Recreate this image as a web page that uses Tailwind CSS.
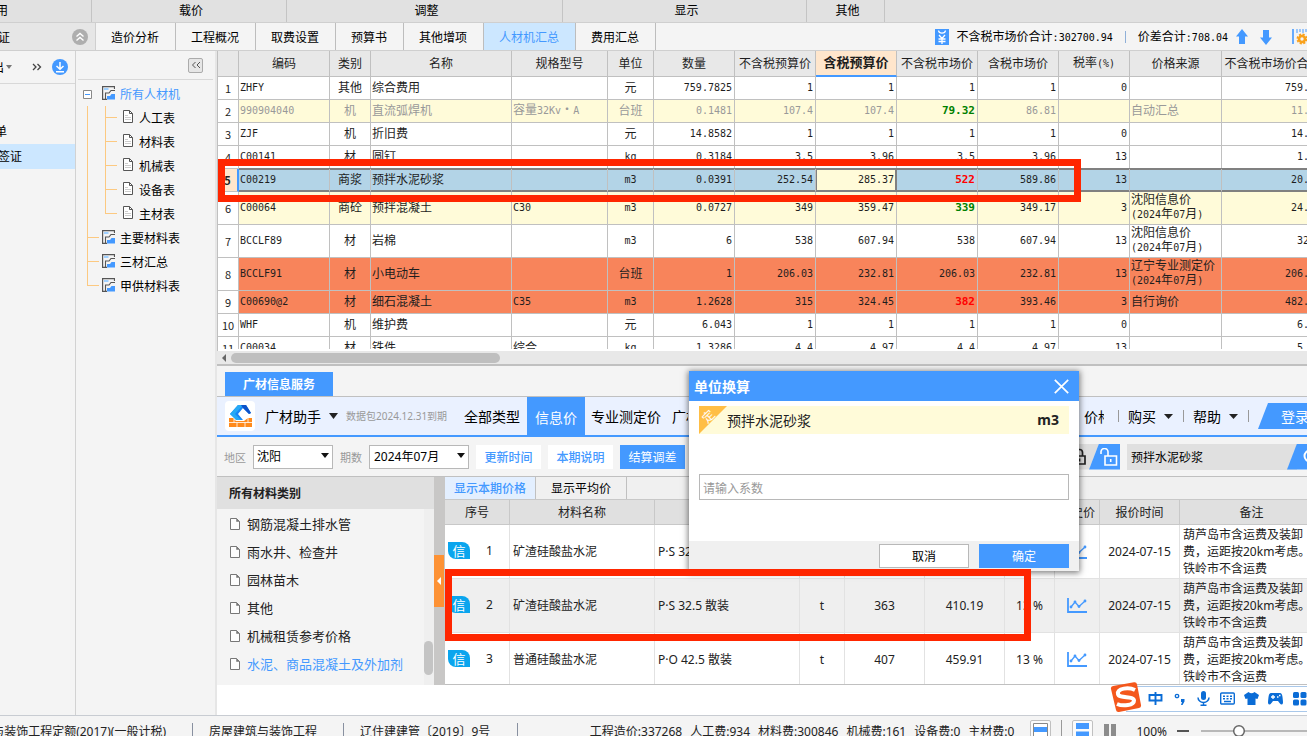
<!DOCTYPE html>
<html lang="zh-CN">
<head>
<meta charset="utf-8">
<title>人材机汇总</title>
<script src="https://cdn.jsdelivr.net/npm/@tailwindcss/browser@4"></script>
</head>
<body class="relative flex h-screen flex-col overflow-hidden bg-[#f4f4f4] font-['Noto_Sans_CJK_SC',sans-serif] text-xs leading-4 text-black">

<svg class="hidden">
  <symbol id="page" viewBox="0 0 10 13"><path d="M.5.5h6l3 3v9h-9z" fill="#fff" stroke="#555"/><path d="M6.500.5v3h3" fill="none" stroke="#555"/><path d="M2 5.500h3M2 7.500h6M2 9.500h6" stroke="#ccc"/></symbol>
  <symbol id="page-thin" viewBox="0 0 10 12"><path d="M.5.5h6l3 3v8h-9z" fill="#fdfdfd" stroke="#777"/><path d="M6.500.5v3h3z" fill="#777" stroke="#777" stroke-width=".5"/></symbol>
  <symbol id="report" viewBox="0 0 13 14"><path d="M12.500 3V.6H.6v12.800H5" fill="none" stroke="#555" stroke-width="1.200"/><path d="M2 2h4.500v2H2z" fill="#9fd0ff"/><path d="M13 4.500H9L7 7H3.500v6" fill="none" stroke="#555" stroke-width="1.100"/><path d="M5 10h3l1.500-2H13v5.500H5z" fill="#4499ff"/></symbol>
  <symbol id="chart" viewBox="0 0 20 15"><path d="M1 0v14h19" fill="none" stroke="#4499ff" stroke-width="1.800"/><path d="m4 9 4-5 4 4.500L18 3" fill="none" stroke="#4499ff" stroke-width="1.300"/><g fill="#4499ff"><circle cx="4" cy="9" r="1.400"/><circle cx="8" cy="4" r="1.400"/><circle cx="12" cy="8.500" r="1.400"/><circle cx="18" cy="3" r="1.400"/></g></symbol>
</svg>

<!-- ribbon group names -->
<div class="flex h-[23px] shrink-0 border-b border-[#cfcfcf] bg-[#e1e1e1] text-center leading-5 whitespace-nowrap">
  <div class="w-[92px] shrink-0 border-r border-[#c4c4c4] text-left"><span class="-ml-1">用</span></div>
  <div class="w-[195px] shrink-0 border-r border-[#c4c4c4] pl-1">载价</div>
  <div class="w-[276px] shrink-0 border-r border-[#c4c4c4] pl-1">调整</div>
  <div class="w-[244px] shrink-0 border-r border-[#c4c4c4] pl-1">显示</div>
  <div class="w-[78px] shrink-0 border-r border-[#c4c4c4] pl-1">其他</div>
</div>

<!-- page tabs -->
<div class="flex h-7 shrink-0 border-b border-[#cfcfcf] whitespace-nowrap">
  <div class="flex w-24 shrink-0 items-center justify-between border-r border-[#cfcfcf] bg-[#e6e6e6] pr-[7px]">
    <span class="-ml-0.5">证</span>
    <button aria-label="收起"><svg class="size-4" viewBox="0 0 16 16"><circle cx="8" cy="8" r="8" fill="#aeaeae"/><path d="m4.500 7.500 3.500-3 3.500 3m-7 4 3.500-3 3.500 3" fill="none" stroke="#fff" stroke-width="1.400"/></svg></button>
  </div>
  <nav class="flex text-center">
    <button class="border-r border-[#bdbdbd] pr-4 pl-[15px]">造价分析</button>
    <button class="border-r border-[#bdbdbd] pr-4 pl-[15px]">工程概况</button>
    <button class="border-r border-[#bdbdbd] pr-4 pl-[15px]">取费设置</button>
    <button class="border-r border-[#bdbdbd] pr-4 pl-[15px]">预算书</button>
    <button class="border-r border-[#bdbdbd] pr-4 pl-[15px]">其他增项</button>
    <button class="border-r border-[#bdbdbd] bg-[#cce7ff] pr-4 pl-[15px] text-[#4499ff]">人材机汇总</button>
    <button class="border-r border-[#bdbdbd] pr-4 pl-[15px]">费用汇总</button>
  </nav>
  <div class="-mr-[3px] ml-auto flex shrink-0 items-center">
    <svg class="mr-2 h-4 w-3.5" viewBox="0 0 14 16"><path d="M0 0h14v16H0z" fill="#4499ff"/><path d="M3.500 1.500C4 5 10 5 10.500 1.500M4 6l3 3.500L10 6M3.500 10h7M3.500 12.500h7M7 9.500V15" fill="none" stroke="#fff" stroke-width="1.300"/></svg>
    <span>不含税市场价合计<span class="font-['DejaVu_Sans_Mono'] text-[10px]">:302700.94</span></span>
    <span class="mx-3 h-3 w-px bg-[#8fb0d8]"></span>
    <span>价差合计<span class="font-['DejaVu_Sans_Mono'] text-[10px]">:708.04</span></span>
    <svg class="ml-2 h-4 w-3" viewBox="0 0 12 16"><path d="m6 0 6 7.500H9V15H3V7.500H0z" fill="#4499ff"/></svg>
    <svg class="ml-3 h-4 w-3" viewBox="0 0 12 16"><path d="m6 16 6-7.500H9V1H3v7.500H0z" fill="#4499ff"/></svg>
    <svg class="ml-5 h-4 w-[18px]" viewBox="0 0 18 16"><path d="M1 0v15" stroke="#4499ff" stroke-width="1.600"/><path d="M5 0v4M8 0v3M11 0v4M14 0v3M17 0v4" stroke="#4499ff"/><circle cx="10" cy="10" r="3" fill="none" stroke="#f9a11b" stroke-width="2.600"/><circle cx="10" cy="10" r="4.700" fill="none" stroke="#f9a11b" stroke-width="1.600" stroke-dasharray="2.200 1.490"/></svg>
  </div>
</div>

<div class="flex min-h-0 flex-1">
  <!-- project column -->
  <aside class="w-[76px] shrink-0 overflow-hidden border-r border-[#d2d2d2]">
    <div class="flex h-[33px] items-center border-b border-[#d8d8d8]">
      <button class="-ml-2 flex items-center">出<svg class="ml-0.5 h-1 w-1.5" viewBox="0 0 6 4"><path d="M0 0h6L3 4z" fill="#777"/></svg></button>
      <svg class="ml-5 h-2 w-2.5" viewBox="0 0 10 8"><path d="m1 1 3 3-3 3m4.500-6 3 3-3 3" fill="none" stroke="#444" stroke-width="1.300"/></svg>
      <button class="ml-2.5" aria-label="下载"><svg class="size-4" viewBox="0 0 16 16"><circle cx="8" cy="8" r="8" fill="#4499ff"/><path d="M8 3v7M4.500 7 8 10.300 11.500 7M4 12.700h8" fill="none" stroke="#fff" stroke-width="1.500"/></svg></button>
    </div>
    <div class="mt-[35px] h-[25px] leading-6"><span class="-ml-[5px]">单</span></div>
    <div class="h-[25px] bg-[#cce7ff] leading-6"><span class="-ml-0.5">签证</span></div>
  </aside>

  <!-- material tree -->
  <aside class="w-[141px] shrink-0 border-r-2 border-[#e6e6e6] px-0.5">
    <div class="flex h-[29px] items-center justify-end border-b border-[#d8d8d8] pr-2.5">
      <button aria-label="折叠" class="flex h-[15px] w-[15px] items-center justify-center rounded-xs border border-[#ababab] bg-[#e6e6e6]"><svg class="h-2 w-2.5" viewBox="0 0 10 8"><path d="M4.500 1 1.500 4l3 3M9 1 6 4l3 3" fill="none" stroke="#555"/></svg></button>
    </div>
    <div class="pt-0.5">
      <div class="flex h-6 items-center text-[#4499ff]">
        <svg class="ml-[5px] size-[9px]" viewBox="0 0 9 9"><path d="M.5.5h8v8h-8z" fill="#fff" stroke="#888"/><path d="M2 4.500h5" stroke="#4499ff"/></svg>
        <svg class="mr-[5px] mb-0.5 ml-2.5 h-3.5 w-[13px]"><use href="#report"/></svg>所有人材机
      </div>
      <ul id="tree" class="ml-[9px] leading-6"></ul>
    </div>
  </aside>

  <main class="flex min-w-0 flex-1 flex-col bg-white">
    <!-- upper grid -->
    <section class="h-[300px] shrink-0 overflow-hidden border-l border-[#c0c0c0]">
      <div class="h-[298px] overflow-hidden">
        <table class="w-[1106px] table-fixed border-separate border-spacing-0 leading-3.5 text-[#1e1e1e]">
          <colgroup><col class="w-[21px]"><col class="w-[91px]"><col class="w-[41px]"><col class="w-[141px]"><col class="w-[96px]"><col class="w-[46px]"><col class="w-[81px]"><col class="w-[81px]"><col class="w-[81px]"><col class="w-[81px]"><col class="w-[81px]"><col class="w-[71px]"><col class="w-[92px]"><col class="w-[102px]"></colgroup>
          <thead><tr id="gridHead"></tr></thead>
          <tbody id="gridBody"></tbody>
        </table>
      </div>
    </section>
    <div class="flex h-[13px] shrink-0 items-center bg-[#e8e8e8]">
      <svg class="ml-[5px] h-2 w-1" viewBox="0 0 4 8"><path d="M4 0v8L0 4z" fill="#666"/></svg>
      <div class="ml-[5px] h-2.5 w-[269px] rounded-full bg-[#bfbfbf]"></div>
    </div>

    <!-- price service -->
    <section class="flex min-h-0 flex-1 flex-col overflow-hidden border-t-2 border-[#c0c0c0]">
      <div class="flex h-[31px] shrink-0 items-end border-b border-[#c0c0c0] bg-[#f4f4f4] pl-2">
        <button class="h-6 w-[108px] bg-[#4499ff] font-bold text-white">广材信息服务</button>
      </div>
      <div class="flex h-10 shrink-0 border-b-2 border-[#4499ff] bg-[#eaf1ff] text-sm whitespace-nowrap">
        <div class="flex w-[310px] shrink-0 items-center pl-2">
          <svg class="size-[30px] shrink-0" viewBox="0 0 30 30"><rect width="30" height="30" rx="4" fill="#fff"/><path d="M13 4h8l5 8-2 1-6-6-5 6 5 6h-6l-7-6z" fill="#1a86f5"/><path d="m5 13 8-9h5l-8 9 6 6h-5z" fill="#27a9f5"/><path d="M16 4h5l5 8-2 1-6-6z" fill="#0c52c9"/><path d="M4 17h4l3 3h8l4-3h4v9H4z" fill="#ff8a1c"/><path d="M4 21.500h23M12 21.500V26M20 21.500V26M23 17v4.500M9 18v3.500" stroke="#fff" stroke-width=".8"/></svg>
          <button class="ml-2.5 flex items-center">广材助手<svg class="ml-2 h-1.5 w-[9px]" viewBox="0 0 9 6"><path d="M0 0h9L4.500 6z" fill="#222"/></svg></button>
          <span class="ml-2 font-['Noto_Sans','Noto_Sans_CJK_SC',sans-serif] text-[10px] text-[#999]">数据包2024.12.31到期</span>
          <button class="ml-auto pr-[7px]">全部类型</button>
        </div>
        <button class="h-[39px] w-[58px] shrink-0 bg-[#4499ff] text-white">信息价</button>
        <button class="ml-1.5">专业测定价</button>
        <div class="ml-[11px] flex w-4 overflow-hidden"><button>广材网</button></div>
        <div class="-mr-[9px] ml-auto flex items-center">
          <button class="mr-3.5 w-5 overflow-hidden">价格</button><span class="h-3 w-px bg-[#999]"></span>
          <button class="ml-[9px] flex items-center">购买<svg class="mx-2 h-[5px] w-[9px]" viewBox="0 0 9 5"><path d="M0 0h9L4.500 5z" fill="#222"/></svg></button>
          <span class="ml-0.5 h-3 w-px bg-[#999]"></span>
          <button class="ml-[9px] flex items-center">帮助<svg class="mx-2 h-[5px] w-[9px]" viewBox="0 0 9 5"><path d="M0 0h9L4.500 5z" fill="#222"/></svg></button>
          <span class="mr-[9px] ml-0.5 h-3 w-px bg-[#999]"></span>
          <button class="h-[26px] w-[58px] bg-[#4499ff] pl-4 text-white [clip-path:polygon(10px_0,100%_0,100%_100%,0_100%)]">登录</button>
        </div>
      </div>
      <div class="flex h-10 shrink-0 items-center border-b border-[#c0c0c0] bg-[#f4f4f4] pl-[7px] whitespace-nowrap">
        <label for="area" class="mr-[7px] text-[11px] text-[#999]">地区</label>
        <div class="relative mr-[7px]"><select id="area" class="h-6 w-20 appearance-none border border-[#b8b8b8] bg-white px-[3px] font-['Noto_Sans','Noto_Sans_CJK_SC',sans-serif]"><option>沈阳</option></select><svg class="pointer-events-none absolute top-2 right-1 h-[5px] w-2" viewBox="0 0 8 5"><path d="M0 0h8L4 5z" fill="#111"/></svg></div>
        <label for="term" class="mr-[7px] text-[11px] text-[#999]">期数</label>
        <div class="relative mr-[7px]"><select id="term" class="h-6 w-[100px] appearance-none border border-[#b8b8b8] bg-white px-1 font-['Noto_Sans','Noto_Sans_CJK_SC',sans-serif]"><option>2024年07月</option></select><svg class="pointer-events-none absolute top-2 right-1 h-[5px] w-2" viewBox="0 0 8 5"><path d="M0 0h8L4 5z" fill="#111"/></svg></div>
        <button class="mr-[7px] h-6 w-[65px] bg-white font-medium text-[#4499ff]">更新时间</button>
        <button class="mr-[7px] h-6 w-[65px] bg-white font-medium text-[#4499ff]">本期说明</button>
        <button class="h-6 w-[65px] bg-[#4499ff] text-white">结算调差</button>
        <div class="ml-auto flex h-[26px]">
          <button aria-label="锁定" class="-mr-2.5 flex h-[26px] w-10 items-center bg-[#dedede] pl-3.5 [clip-path:polygon(0_0,100%_0,30px_100%,0_100%)]"><svg class="h-[17px] w-[13px]" viewBox="0 0 13 17"><path d="M1 8h11v8H1zM3.500 8V4.500a3 3 0 0 1 6 0V8M6.500 10.500v3" fill="none" stroke="#222" stroke-width="1.700"/></svg></button>
          <button aria-label="解锁" class="flex h-[26px] w-[31px] items-center bg-[#4499ff] pl-2.5 [clip-path:polygon(10px_0,100%_0,100%_100%,0_100%)]"><svg class="h-[18px] w-[19px]" viewBox="0 0 19 18"><path d="M6 8h11.500v9H6zM9 8V4.500a3.500 3.500 0 0 0-7-1V6M11.700 11v3" fill="none" stroke="#fff" stroke-width="1.600"/></svg></button>
          <input aria-label="搜索材料" value="预拌水泥砂浆" class="-mr-2.5 ml-[7px] h-[26px] w-[170px] bg-[#e0e0e0] px-1">
          <button aria-label="搜索" class="flex h-[26px] w-5 items-center overflow-hidden bg-[#4499ff] pl-4 [clip-path:polygon(10px_0,100%_0,100%_100%,0_100%)]"><svg class="size-4 shrink-0" viewBox="0 0 16 16"><circle cx="7" cy="7" r="5.500" fill="none" stroke="#fff" stroke-width="2"/></svg></button>
        </div>
      </div>

      <div class="flex h-[208px] shrink-0">
        <div class="flex w-[217px] shrink-0 flex-col bg-[#f4f4f4]">
          <h2 class="h-8 shrink-0 bg-[#e0e0e0] pl-3 leading-8 font-bold text-[#222]">所有材料类别</h2>
          <div class="flex flex-1">
            <ul id="kinds" class="flex-1 pt-px text-[13px] leading-7 text-[#222]"></ul>
            <div class="flex w-2.5 items-end bg-[#efefef] pb-2.5"><div class="h-[34px] w-[9px] rounded-full bg-[#c4c4c4]"></div></div>
          </div>
        </div>
        <div class="flex w-[11px] shrink-0 items-center bg-[#c8c7c6]"><button aria-label="收起类别" class="flex h-[52px] w-2.5 items-center justify-center bg-[#fd9235]"><svg class="h-2 w-1" viewBox="0 0 4 8"><path d="M4 0v8L0 4z" fill="#fff"/></svg></button></div>
        <div class="min-w-0 flex-1 overflow-hidden border-b border-[#c0c0c0]">
          <div class="flex h-[23px] border-b border-[#c8c8c8] bg-[#f0f0f0]">
            <button class="w-[91px] border-r border-[#c0c0c0] bg-[#e3efff] font-medium text-[#4499ff]">显示本期价格</button>
            <button class="w-[91px] border-r border-[#c0c0c0]">显示平均价</button>
          </div>
          <table class="w-[879px] table-fixed border-separate border-spacing-0 text-[#222]">
            <colgroup><col class="w-[65px]"><col class="w-[145px]"><col class="w-[145px]"><col class="w-[45px]"><col class="w-[80px]"><col class="w-[80px]"><col class="w-[50px]"><col class="w-[45px]"><col class="w-[80px]"><col class="w-[144px]"></colgroup>
            <thead><tr id="priceHead"></tr></thead>
            <tbody id="priceBody" class="font-['Noto_Sans','Noto_Sans_CJK_SC',sans-serif]"></tbody>
          </table>
        </div>
      </div>
    </section>
  </main>
</div>

<!-- status bar -->
<footer class="flex h-[21px] shrink-0 border-t border-[#c8ccd2] font-['Noto_Sans','Noto_Sans_CJK_SC',sans-serif] whitespace-nowrap text-[#222]">
  <div class="flex w-[178px] shrink-0 justify-end overflow-hidden pt-2 pr-3"><span>与装饰工程定额(2017)(一般计税)</span></div>
  <span class="mt-[7px] ml-3.5 h-4 w-px shrink-0 bg-[#8890a0]"></span>
  <span class="mx-4 pt-2">房屋建筑与装饰工程</span>
  <span class="mt-[7px] ml-2.5 h-4 w-px shrink-0 bg-[#8890a0]"></span>
  <span class="ml-4 w-[157px] shrink-0 pt-2">辽住建建管〔2019〕9号</span>
  <span class="mt-[7px] h-4 w-px shrink-0 bg-[#8890a0]"></span>
  <div class="-mr-5 ml-auto flex">
    <div class="mr-4 flex gap-2 pt-2"><span>工程造价:337268</span><span>人工费:934</span><span>材料费:300846</span><span>机械费:161</span><span>设备费:0</span><span>主材费:0</span></div>
    <button aria-label="列表" class="mt-1 h-5 w-[21px] rounded-xs border border-[#c0c0c0] bg-[#fbfbfb]"><svg class="mx-auto h-[15px] w-[15px]" viewBox="0 0 15 15"><path d="M.5.5h14v14H.5z" fill="#fff" stroke="#888"/><path d="M1 4h13v5H1z" fill="#4499ff"/></svg></button>
    <span class="mx-2.5 mt-1 h-5 w-px bg-[#999]"></span>
    <button aria-label="上下" class="mt-1 h-5 w-[21px] rounded-xs border border-[#c0c0c0] bg-[#fbfbfb]"><svg class="mx-auto h-[15px] w-[13px]" viewBox="0 0 13 15"><path d="M0 0h13v6H0zm0 8.500h13V15H0z" fill="#4499ff"/></svg></button>
    <button aria-label="左右" class="ml-[11px]"><svg class="mt-2 h-4 w-3" viewBox="0 0 12 16"><path d="M0 0h5v16H0zm7 0h5v16H7z" fill="#8c8c8c"/></svg></button>
    <span class="mr-2.5 ml-5 pt-2">100%</span>
    <button aria-label="缩小" class="mt-2.5 h-0.5 w-3 self-center bg-[#555]"></button>
    <svg class="mt-2 ml-3 h-4 w-[126px]" viewBox="0 0 126 16"><path d="M0 7h126" stroke="#b8b8b8" stroke-width="2"/><circle cx="38" cy="7" r="5.300" fill="#fff" stroke="#666" stroke-width="1.500"/></svg>
  </div>
</footer>

<!-- unit conversion dialog -->
<div role="dialog" aria-labelledby="dlgTitle" class="absolute top-[371px] left-[689px] flex h-[200px] w-[390px] flex-col bg-white shadow-[0_1px_6px_1px_rgba(0,0,0,0.5)]">
  <div class="flex h-[30px] items-center justify-between bg-[#4499ff] pr-2.5 pl-[5px] text-white">
    <h2 id="dlgTitle" class="text-sm font-bold">单位换算</h2>
    <button aria-label="关闭"><svg class="size-[15px]" viewBox="0 0 15 15"><path d="m.8.8 13.400 13.400M14.200.8.8 14.200" stroke="#fff" stroke-width="1.700"/></svg></button>
  </div>
  <div class="mx-2.5 mt-[5px] flex h-7 items-center bg-[#fffbd9] pr-2.5 text-sm text-[#222]">
    <div class="relative h-7 w-7 bg-[#ffbe45] [clip-path:polygon(0_0,100%_0,0_100%)]"><span class="absolute top-0.5 left-[3px] -rotate-45 text-xs leading-4 text-white">定</span></div>
    <span>预拌水泥砂浆</span><span class="ml-auto font-['Noto_Sans'] font-bold">m3</span>
  </div>
  <input aria-label="系数" placeholder="请输入系数" class="mx-2.5 mt-10 h-[26px] border border-[#b8b8b8] px-[3px] placeholder:text-[#999]">
  <div class="mt-auto flex h-[30px] justify-end gap-2.5 bg-[#f0f0f0] pt-[3px] pr-2.5">
    <button class="h-6 w-[90px] border border-[#b8b8b8] bg-white">取消</button>
    <button class="h-6 w-[90px] bg-[#4499ff] text-white">确定</button>
  </div>
</div>

<!-- highlight frames -->
<div class="pointer-events-none absolute top-[159px] left-[218px] h-[43px] w-[863px] border-7 border-[#ff2600]"></div>
<div class="pointer-events-none absolute top-[569px] left-[445px] h-[72px] w-[586px] border-7 border-[#ff2600]"></div>

<!-- input method bar -->
<div class="absolute top-[682px] left-[1110px] flex h-8 w-[200px] items-center">
  <div class="absolute inset-x-4 top-1 right-0 h-[26px] border-y border-[#a9c8ea] bg-white"></div>
  <svg class="relative h-8 w-8" viewBox="0 0 32 32"><path d="M1 7Q.5 4.500 3 4L24 .3q2.500-.4 3 2L31 23q.4 2.500-2 3L9 30q-2.500.5-3-2z" fill="#f4571c"/><path d="M25 8C19 5 7 6 8 12c1 5 16 1.500 16 6.500 0 5-11 6-17 3.500" fill="none" stroke="#fff" stroke-width="4"/></svg>
  <div class="relative ml-1.5 flex items-center gap-[9px] text-[#0a6cd6]">
    <svg class="size-[15px]" viewBox="0 0 15 15"><path d="M1.500 4h12v5.500h-12zM7.500 1v13" fill="none" stroke="currentColor" stroke-width="1.900"/></svg>
    <svg class="size-[15px]" viewBox="0 0 15 15"><circle cx="5" cy="5" r="1.700" fill="none" stroke="currentColor" stroke-width="1.300"/><path d="M9 8h3.500v2.500L10.500 14H9l1-3H9z" fill="currentColor"/></svg>
    <svg class="size-[15px]" viewBox="0 0 15 15"><rect x="5" width="5" height="9" rx="2.500" fill="currentColor"/><path d="M2 6.500a5.500 5 0 0 0 11 0M7.500 11.500V14M4.500 14.200h6" fill="none" stroke="currentColor" stroke-width="1.500"/></svg>
    <svg class="size-[15px]" viewBox="0 0 15 15"><rect x=".7" y="2" width="13.600" height="11" rx="1" fill="none" stroke="currentColor" stroke-width="1.400"/><path d="M3 5.200h2m1.500 0h2m1.500 0h2M3 7.700h2m1.500 0h2m1.500 0h2M4 10.500h7" stroke="currentColor" stroke-width="1.400"/></svg>
    <svg class="size-[15px]" viewBox="0 0 15 15"><path d="M4.500 1q3 2.500 6 0L15 4l-1.500 4-2-.5V14h-8V7.500l-2 .5L0 4z" fill="currentColor"/></svg>
    <svg class="size-[15px]" viewBox="0 0 15 15"><path d="M3 2h9q2 0 2.500 4t.5 6q-1 3-3.500 0L10 10H5l-1.500 2Q1 15 0 12q0-2 .5-6T3 2z" fill="currentColor"/><path d="M5 4v4M3 6h4M9 6h1.500M11 4.500h1.500" stroke="#fff" stroke-width="1.300"/></svg>
    <svg class="size-[15px]" viewBox="0 0 15 15"><rect x="1" y="1" width="6" height="6" rx="1.500" fill="currentColor"/><rect x="8.500" y="1" width="6" height="6" rx="1.500" fill="currentColor"/><rect x="1" y="8.500" width="6" height="6" rx="1.500" fill="currentColor"/><rect x="8.500" y="8.500" width="6" height="6" rx="1.500" fill="currentColor"/></svg>
  </div>
</div>

<script>
const $ = id => document.getElementById(id);
// Latin runs are set in the monospaced face beside the 12px Chinese text.
const mono = s => s.replace(/[\x21-\x7e]+/g, r => `<span class="font-['DejaVu_Sans_Mono'] text-[10px]">${r}</span>`);

const leaves = ['人工表', '材料表', '机械表', '设备表', '主材表'];
const roots = ['主要材料表', '三材汇总', '甲供材料表'];
const line = '<span class="h-3 w-3 shrink-0 self-start border-b border-[#fcc981]"></span>';
$('tree').innerHTML =
  '<li class="border-l border-[#fcc981]"><ul class="ml-[17px]">' + leaves.map((t, i) =>
    `<li class="relative flex h-6 items-center">
      <span class="absolute top-0 left-0 w-px bg-[#fcc981] ${i < 4 ? 'h-6' : 'h-3'}"></span>${line}
      <svg class="mr-1.5 mb-[3px] ml-1.5 h-[13px] w-2.5"><use href="#page"/></svg>${t}</li>`).join('') + '</ul></li>' +
  roots.map((t, i) =>
    `<li class="relative flex h-6 items-center">
      <span class="absolute top-0 left-0 w-px bg-[#fcc981] ${i < 2 ? 'h-6' : 'h-3'}"></span>${line}
      <svg class="mr-[5px] mb-0.5 ml-[3px] h-3.5 w-[13px]"><use href="#report"/></svg>${t}</li>`).join('');

const heads = ['', '编码', '类别', '名称', '规格型号', '单位', '数量', '不含税预算价', '含税预算价', '不含税市场价', '含税市场价', '税率(%)', '价格来源', '不含税市场价合计'];
$('gridHead').innerHTML = heads.map((h, i) =>
  `<th class="h-[26px] border-r pb-0.5 whitespace-nowrap ${i === 8 ? 'border-b-2 border-r-[#c0c0c0] border-b-[#4499ff] bg-[#ffe6cc] text-[13px] font-bold' : 'border-b border-[#c0c0c0] bg-[#e8e8e8] font-normal'}">${mono(h)}</th>`).join('');

const tones = { w: 'bg-white', y: 'bg-[#fffbd9] text-[#999]', l: 'bg-[#fffbd9]', b: 'bg-[#b3d4e7]', o: 'bg-[#f8845b]' };
const rows = [
  ['w', 'ZHFY', '其他', '综合费用', '', '元', '759.7825', '1', '1', '1', '1', '0', '', '759.78'],
  ['y', '990904040', '机', '直流弧焊机', '容量32Kv·A', '台班', '0.1481', '107.4', '107.4', 'g79.32', '86.81', '', '自动汇总', '11.75'],
  ['w', 'ZJF', '机', '折旧费', '', '元', '14.8582', '1', '1', '1', '1', '0', '', '14.86'],
  ['w', 'C00141', '材', '圆钉', '', 'kg', '0.3184', '3.5', '3.96', '3.5', '3.96', '13', '', '1.11'],
  ['b', 'C00219', '商浆', '预拌水泥砂浆', '', 'm3', '0.0391', '252.54', '285.37', 'r522', '589.86', '13', '', '20.41'],
  ['l', 'C00064', '商砼', '预拌混凝土', 'C30', 'm3', '0.0727', '349', '359.47', 'g339', '349.17', '3', '沈阳信息价<br>(2024年07月)', '24.65'],
  ['w', 'BCCLF89', '材', '岩棉', '', 'm3', '6', '538', '607.94', '538', '607.94', '13', '沈阳信息价<br>(2024年07月)', '3228'],
  ['o', 'BCCLF91', '材', '小电动车', '', '台班', '1', '206.03', '232.81', '206.03', '232.81', '13', '辽宁专业测定价<br>(2024年07月)', '206.03'],
  ['o', 'C00690@2', '材', '细石混凝土', 'C35', 'm3', '1.2628', '315', '324.45', 'r382', '393.46', '3', '自行询价', '482.39'],
  ['w', 'WHF', '机', '维护费', '', '元', '6.043', '1', '1', '1', '1', '0', '', '6.04'],
  ['w', 'C00034', '材', '铁件', '综合', 'kg', '1.3286', '4.4', '4.97', '4.4', '4.97', '13', '', '5.85'],
];
const marks = { g: 'text-[#008000]', r: 'text-[#ff0000]' };
$('gridBody').innerHTML = rows.map((r, n) => {
  const sel = r[0] === 'b';
  const tall = n > 4 && n < 8;
  const num = `<th class="border-r border-b border-[#c0c0c0] text-[11px] ${sel ? 'border-r-2 border-r-[#4499ff] bg-[#ffe6cc] font-bold' : 'bg-white font-normal'}">${n + 1}</th>`;
  return `<tr class="${tall ? 'h-[33px]' : 'h-[23px]'}">${num}` + r.slice(1).map((c, k) => {
    const align = k === 1 || k === 4 ? 'text-center' : k > 4 && k !== 11 ? 'pr-0.5 text-right' : 'pl-px';
    let edge = 'border-b-[#c0c0c0] border-r-[#c0c0c0]';
    if (sel) edge = k === 7
      ? 'border-[#808080] shadow-[inset_0_1px_#808080,inset_0_-1px_#808080,inset_1px_0_#808080,inset_-1px_0_#808080,0_-1px_#808080]'
      : 'border-b-[#808080] border-r-[#c0c0c0] shadow-[inset_0_1px_#808080,inset_0_-1px_#808080,0_-1px_#808080]';
    const tone = sel && k === 7 ? tones.l : tones[r[0]];
    const body = marks[c[0]] ? `<span class="font-['DejaVu_Sans_Mono'] text-[11px] font-bold ${marks[c[0]]}">${c.slice(1)}</span>`
      : c.split('<br>').map(mono).join('<br>');
    return `<td class="border-r border-b pb-0.5 whitespace-nowrap ${edge} ${align} ${tone}">${body}</td>`;
  }).join('') + '</tr>';
}).join('');

const kinds = ['钢筋混凝土排水管', '雨水井、检查井', '园林苗木', '其他', '机械租赁参考价格', '水泥、商品混凝土及外加剂'];
$('kinds').innerHTML = kinds.map((k, i) =>
  `<li class="flex h-7 items-center whitespace-nowrap pl-[13px] ${i === 5 ? 'text-[#4499ff]' : ''}"><svg class="mr-[7px] h-3 w-2.5"><use href="#page-thin"/></svg>${k}</li>`).join('');

$('priceHead').innerHTML = ['序号', '材料名称', '规格型号', '单位', '不含税市场价', '含税市场价', '税率', '历史价', '报价时间', '备注'].map(h =>
  `<th class="h-[25px] overflow-hidden border-r border-b border-[#c8c8c8] bg-[#e0e0e0] font-normal whitespace-nowrap">${h}</th>`).join('');
const prices = [
  ['矿渣硅酸盐水泥', 'P·S 32.5 袋装', 't', '363', '410.19', '13 %'],
  ['矿渣硅酸盐水泥', 'P·S 32.5 散装', 't', '363', '410.19', '13 %'],
  ['普通硅酸盐水泥', 'P·O 42.5 散装', 't', '407', '459.91', '13 %'],
];
$('priceBody').innerHTML = prices.map((p, n) => {
  const bg = n === 1 ? 'bg-[#efefef]' : 'bg-white';
  const td = (c, cls) => `<td class="h-[54px] border-r border-b border-[#e2e2e2] whitespace-nowrap ${bg} ${cls}">${c}</td>`;
  return '<tr>' +
    td(`<div class="flex items-center"><span class="ml-[3px] flex h-[17px] w-[22px] items-center justify-center rounded-tr-lg rounded-bl-lg bg-[#0aa5ee] text-[13px] text-white">信</span><span class="ml-4">${n + 1}</span></div>`, 'pb-0.5') +
    td(p[0], 'pl-[3px]') + td(p[1], 'pl-[3px]') + p.slice(2).map(c => td(c, 'text-center')).join('') +
    td('<svg class="mx-auto h-[15px] w-5"><use href="#chart"/></svg>', '') + td('2024-07-15', 'text-center') +
    td('葫芦岛市含运费及装卸<br>费，运距按20km考虑。<br>铁岭市不含运费', 'pl-[3px] leading-[17px]') + '</tr>';
}).join('');
</script>
</body>
</html>
